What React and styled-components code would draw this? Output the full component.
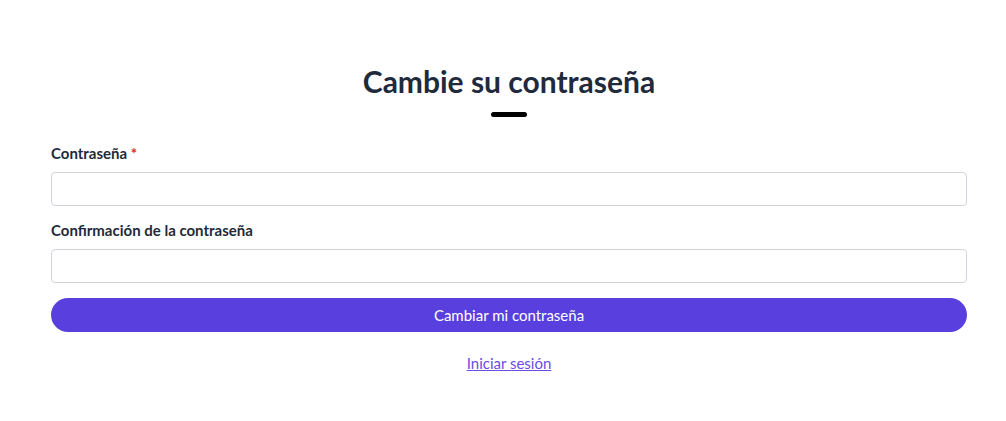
import React from "react";
import styled, { createGlobalStyle } from "styled-components";

const GlobalStyle = createGlobalStyle`
  body {
    margin: 0;
    background: #fff;
    font-family: "Lato", "Noto Sans", sans-serif;
  }
  * { box-sizing: border-box; }
`;

const App = () => {
  return (
    <Page>
      <GlobalStyle />
      <Header>
        <Title>Cambie su contraseña</Title>
        <Bar />
      </Header>
      <Form onSubmit={(e) => e.preventDefault()}>
        <Field>
          <Label>
            Contraseña <Required>*</Required>
          </Label>
          <Input type="password" />
        </Field>
        <Field>
          <Label>Confirmación de la contraseña</Label>
          <Input type="password" />
        </Field>
        <Button type="submit">Cambiar mi contraseña</Button>
      </Form>
      <Footer>
        <Link href="#">Iniciar sesión</Link>
      </Footer>
    </Page>
  );
};

export default App;

const Page = styled.div`
  padding: 61px 39px 0 51px;
  display: flex;
  flex-direction: column;
`;
const Header = styled.div`
  display: flex;
  flex-direction: column;
  align-items: center;
`;
const Title = styled.h1`
  margin: 0;
  font-size: 30px;
  line-height: 40px;
  font-weight: 700;
  color: #1f2a3c;
`;
const Bar = styled.div`
  width: 36px;
  height: 5px;
  border-radius: 3px;
  background: #000;
  margin-top: 11px;
`;
const Form = styled.form`
  margin-top: 26px;
  display: flex;
  flex-direction: column;
`;
const Field = styled.div`
  display: flex;
  flex-direction: column;
  margin-bottom: 14px;
`;
const Label = styled.label`
  font-size: 15px;
  line-height: 20px;
  font-weight: 700;
  color: #1f2a3c;
  margin-bottom: 9px;
`;
const Required = styled.span`
  color: #dc2626;
`;
const Input = styled.input`
  height: 34px;
  width: 100%;
  border: 1px solid #d1d5db;
  border-radius: 4px;
  background: #fff;
  outline: none;
`;
const Button = styled.button`
  height: 34px;
  width: 100%;
  margin-top: 1px;
  border: none;
  border-radius: 17px;
  background: #5a3fdf;
  color: #fff;
  font-family: inherit;
  font-size: 15px;
  cursor: pointer;
`;
const Footer = styled.div`
  display: flex;
  justify-content: center;
  margin-top: 21px;
`;
const Link = styled.a`
  font-size: 15px;
  line-height: 20px;
  color: #6d4ce3;
  text-decoration: underline;
`;
